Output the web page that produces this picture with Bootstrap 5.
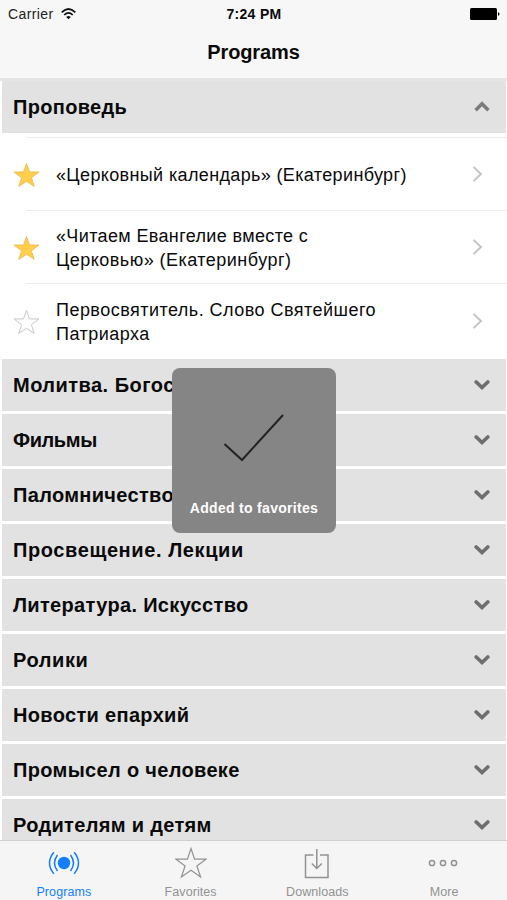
<!DOCTYPE html>
<html lang="ru">
<head>
<meta charset="utf-8">
<meta name="viewport" content="width=device-width, initial-scale=1">
<title>Programs</title>
<link href="https://cdn.jsdelivr.net/npm/bootstrap@5.3.0/dist/css/bootstrap.min.css" rel="stylesheet">
<style>
body{font-family:"Liberation Sans",Arial,sans-serif;background:#fff;color:#0a0a0a;height:900px;overflow:hidden}
svg{display:block;flex:none}
.top-bar{height:81px;background:#f7f7f7;border-bottom:3px solid #e5e5e5}
.status{height:28px;font-size:14px;line-height:28px;padding:0 7px 0 8px}
.status>*{flex:1 1 0}
.carrier{letter-spacing:.4px;color:#222}
.wifi{margin-left:7px}
.clock{letter-spacing:.3px}
.title{font-size:20px;line-height:24px;padding-top:12px;letter-spacing:-.1px}
.section-head{height:52px;margin:0 1.5px 3px 2px;padding:0 16px 0 11px;background:#e2e2e2;font-size:20px;font-weight:700;line-height:52px;white-space:nowrap;letter-spacing:.33px}
.open-head{margin-bottom:4px}
.item{height:73px;padding:2px 24px 0 13px;font-size:18px;line-height:24px;letter-spacing:.36px;background:linear-gradient(#ececec,#ececec) 26px 0/100% 1px no-repeat}
.item:last-child{height:76px}
.item-body{margin-left:16px;white-space:nowrap}
.item-next{margin-top:-2px}
.ls-tight{letter-spacing:-.4px}
.ls-wide{letter-spacing:.47px}
.ls-wider{letter-spacing:.6px}
.tabs{height:60px;background:#f5f5f5;border-top:1px solid #cfcfcf;color:#929292;font-size:12.5px;letter-spacing:.08px}
.tab-cell{padding:6px 0 0 1px}
.tab-cell span{line-height:16px;margin-top:5px}
.tab-on{color:#147efb}
.toast-box{left:172px;top:368px;width:164px;height:165px;border-radius:8px;background:#858585;color:#fff;font-size:14px;font-weight:700;letter-spacing:.3px}
.toast-box svg{margin-top:46px}
.toast-box span{margin-top:36px;line-height:20px}
</style>
</head>
<body class="d-flex flex-column position-relative">
<svg width="0" height="0" class="position-absolute">
<symbol id="down" viewBox="0 0 16 12"><path d="M2.200 3 8 8.500l5.800-5.500" fill="none" stroke="#6e6e6e" stroke-width="3.700" stroke-linecap="round"/></symbol>
<symbol id="up" viewBox="0 0 16 12"><path d="M1.600 9.300 8 2.800l6.400 6.500" fill="none" stroke="#7c7c7c" stroke-width="3.500"/></symbol>
<symbol id="next" viewBox="0 0 11 16"><path d="M1.500 .9 9 8l-7.500 7.100" fill="none" stroke="#c3c3c6" stroke-width="1.900"/></symbol>
<symbol id="star" viewBox="0 0 28 26"><path d="M14 1l3.100 8.800 9.900.1-7.900 5.900 2.900 9L14 19.500 6 24.800l2.900-9L1 9.900l9.900-.1z"/></symbol>
</svg>
<header class="top-bar flex-shrink-0">
<div class="status d-flex align-items-center">
<div class="d-flex align-items-center"><span class="carrier">Carrier</span>
<svg class="wifi" width="15" height="12" viewBox="0 0 15 12" fill="none" stroke="#111" stroke-width="1.700"><path d="M.7 4.300Q7.500-2.300 14.300 4.300M3.200 7Q7.500 2.800 11.800 7"/><path d="M5.200 9Q7.500 6.800 9.800 9L7.500 11.300z" fill="#111" stroke="none"/></svg></div>
<div class="text-center fw-bold clock">7:24 PM</div>
<div class="d-flex justify-content-end"><svg width="30" height="12" viewBox="0 0 30 12"><rect width="27" height="12" rx="1.500"/><path d="M28 4q3 2 0 4z"/></svg></div>
</div>
<h1 class="title text-center fw-bold m-0">Programs</h1>
</header>
<main class="flex-grow-1 overflow-hidden">
<div class="section-head open-head d-flex justify-content-between align-items-center"><span>Проповедь</span><svg width="16" height="12"><use href="#up"/></svg></div>
<div class="items">
<div class="item d-flex align-items-center"><svg width="27" height="26" fill="#ffce4b" stroke="#e9b541" stroke-width=".8"><use href="#star"/></svg><div class="item-body flex-grow-1">«Церковный календарь» (Екатеринбург)</div><svg class="item-next" width="11" height="16"><use href="#next"/></svg></div>
<div class="item d-flex align-items-center"><svg width="27" height="26" fill="#ffce4b" stroke="#e9b541" stroke-width=".8"><use href="#star"/></svg><div class="item-body flex-grow-1"><span>«Читаем Евангелие вместе с</span><br><span class="ls-wide">Церковью» (Екатеринбург)</span></div><svg class="item-next" width="11" height="16"><use href="#next"/></svg></div>
<div class="item d-flex align-items-center"><svg width="27" height="26" fill="none" stroke="#c4c4c4" stroke-width="1"><use href="#star"/></svg><div class="item-body ls-wide flex-grow-1">Первосвятитель. Слово Святейшего<br>Патриарха</div><svg class="item-next" width="11" height="16"><use href="#next"/></svg></div>
</div>
<div class="section-head d-flex justify-content-between align-items-center"><span class="ls-wide">Молитва. Богослужение</span><svg width="16" height="12"><use href="#down"/></svg></div>
<div class="section-head d-flex justify-content-between align-items-center"><span class="ls-tight">Фильмы</span><svg width="16" height="12"><use href="#down"/></svg></div>
<div class="section-head d-flex justify-content-between align-items-center"><span>Паломничество</span><svg width="16" height="12"><use href="#down"/></svg></div>
<div class="section-head d-flex justify-content-between align-items-center"><span class="ls-wider">Просвещение. Лекции</span><svg width="16" height="12"><use href="#down"/></svg></div>
<div class="section-head d-flex justify-content-between align-items-center"><span>Литература. Искусство</span><svg width="16" height="12"><use href="#down"/></svg></div>
<div class="section-head d-flex justify-content-between align-items-center"><span class="ls-wider">Ролики</span><svg width="16" height="12"><use href="#down"/></svg></div>
<div class="section-head d-flex justify-content-between align-items-center"><span>Новости епархий</span><svg width="16" height="12"><use href="#down"/></svg></div>
<div class="section-head d-flex justify-content-between align-items-center"><span>Промысел о человеке</span><svg width="16" height="12"><use href="#down"/></svg></div>
<div class="section-head d-flex justify-content-between align-items-center"><span>Родителям и детям</span><svg width="16" height="12"><use href="#down"/></svg></div>
</main>
<nav class="tabs row g-0 flex-shrink-0">
<div class="col tab-cell tab-on d-flex flex-column align-items-center"><svg width="32" height="32" viewBox="0 0 32 32" fill="none" stroke="currentColor" stroke-width="1.500"><circle cx="16" cy="16" r="6.200" fill="currentColor" stroke="none"/><path d="M9.500 8Q3.500 16 9.500 24M22.500 8Q28.500 16 22.500 24M5.800 5.200Q-2.800 16 5.800 26.800M26.200 5.200Q34.800 16 26.200 26.800"/></svg><span>Programs</span></div>
<div class="col tab-cell d-flex flex-column align-items-center"><svg width="32" height="32" viewBox="0 0 32 32" fill="none" stroke="currentColor" stroke-width="1.200"><path d="M16 1.500 19.600 12.200H31L21.900 18.900 25.600 30 16 23.300 6.400 30 10.100 18.900 1 12.200H12.400z"/></svg><span>Favorites</span></div>
<div class="col tab-cell d-flex flex-column align-items-center"><svg width="32" height="32" viewBox="0 0 32 32" fill="none" stroke="currentColor" stroke-width="1.500"><path d="M12.500 8H4.500v22.500h22.500V8h-8M15.800 2v19.500M10.800 16.500l5 5 5-5"/></svg><span>Downloads</span></div>
<div class="col tab-cell d-flex flex-column align-items-center"><svg width="32" height="32" viewBox="0 0 32 32" fill="none" stroke="currentColor" stroke-width="1.500"><circle cx="4" cy="16" r="2.600"/><circle cx="15" cy="16" r="2.600"/><circle cx="26" cy="16" r="2.600"/></svg><span>More</span></div>
</nav>
<div class="toast-box position-absolute d-flex flex-column align-items-center" role="status"><svg width="62" height="48" viewBox="0 0 62 48" fill="none" stroke="#222" stroke-width="2"><path d="M1.500 30 19 46 60 1"/></svg><span>Added to favorites</span></div>
<script src="https://cdn.jsdelivr.net/npm/bootstrap@5.3.0/dist/js/bootstrap.bundle.min.js"></script>
</body>
</html>
